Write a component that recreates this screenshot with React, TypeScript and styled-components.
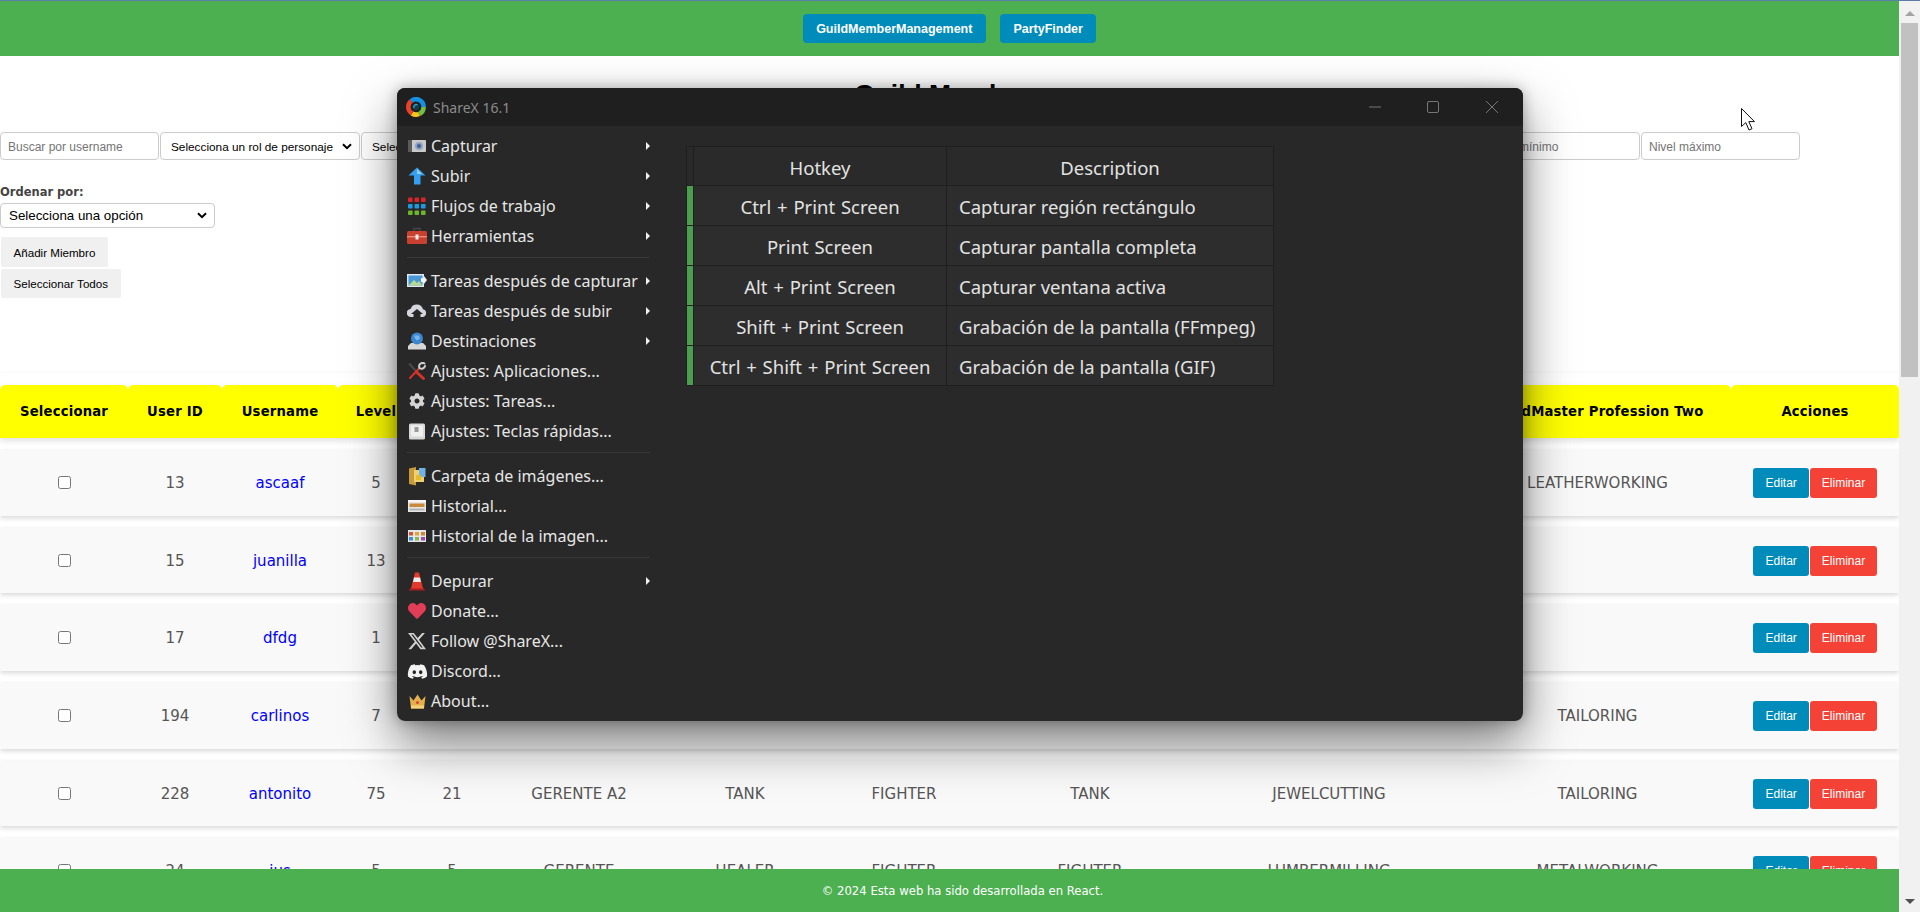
import React from 'react';
import styled, { createGlobalStyle, css } from 'styled-components';
import { FaCog, FaDiscord, FaHeart } from 'react-icons/fa';
import { FaXTwitter } from 'react-icons/fa6';

const GlobalStyle = createGlobalStyle`
  html, body { margin: 0; padding: 0; background: #fff; }
  * { box-sizing: border-box; }
`;

const chevron = css`
  appearance: none;
  background: #fff url("data:image/svg+xml,%3Csvg xmlns='http://www.w3.org/2000/svg' width='10' height='7'%3E%3Cpath d='M1 1.200L5 5.200L9 1.200' fill='none' stroke='%23000' stroke-width='2'/%3E%3C/svg%3E") no-repeat right 7px center;
`;

const Root = styled.div`
  position: relative;
  display: flex;
  width: 1920px;
  height: 912px;
  overflow: hidden;
  border-top: 1px solid #5c7ca8;
  font-family: 'Liberation Sans', Arial, sans-serif;
`;

const PageColumn = styled.div`
  display: flex;
  flex-direction: column;
  width: 1899px;
  height: 100%;
`;

const Header = styled.header`
  display: flex;
  justify-content: center;
  gap: 14px;
  flex: 0 0 55px;
  padding-top: 13px;
  background: #4caf50;
`;

const NavButton = styled.a`
  display: flex;
  align-items: center;
  height: 29px;
  padding: 0 13.5px;
  border-radius: 4px;
  background: #008cba;
  color: #fff;
  font-size: 12.5px;
  font-weight: bold;
`;

const Main = styled.main`
  flex: 1;
  min-height: 0;
  overflow: hidden;
`;

const Title = styled.h1`
  margin: 22px 0;
  font-size: 26.4px;
  line-height: 32px;
  text-align: center;
  color: #000;
`;

const FilterRow = styled.div`
  display: flex;
  gap: 1px;
`;

const FilterInput = styled.input<{ $w?: number }>`
  width: ${(p) => p.$w ?? 159}px;
  height: 28px;
  padding: 2px 7px 0;
  border: 1px solid #ccc;
  border-radius: 4px;
  font-family: 'Liberation Sans', Arial, sans-serif;
  font-size: 12px;
  &::placeholder { color: #757575; }
`;

const FilterSelect = styled.select<{ $w: number }>`
  ${chevron}
  width: ${(p) => p.$w}px;
  height: 28px;
  padding: 1px 20px 0 10px;
  border: 1px solid #ccc;
  border-radius: 4px;
  color: #000;
  font-family: 'Liberation Sans', Arial, sans-serif;
  font-size: 11.8px;
`;

const SortLabel = styled.label`
  display: block;
  margin-top: 25px;
  height: 15px;
  line-height: 15px;
  font-family: 'DejaVu Sans', Verdana, sans-serif;
  font-size: 11.5px;
  font-weight: bold;
  color: #444;
`;

const SortSelect = styled.select`
  ${chevron}
  display: block;
  width: 215px;
  height: 25px;
  margin-top: 3px;
  padding: 0 20px 0 8px;
  border: 1px solid #ccc;
  border-radius: 4px;
  color: #000;
  font-family: 'Liberation Sans', Arial, sans-serif;
  font-size: 13.33px;
`;

const PlainButton = styled.button`
  display: block;
  height: ${(p: { $h: number }) => p.$h}px;
  margin: 2px 0 0 1px;
  padding: 0 12.5px;
  border: none;
  border-radius: 2px;
  background: #f0f0f0;
  color: #000;
  font-family: 'Liberation Sans', Arial, sans-serif;
  font-size: 11.6px;
`;

const ButtonGroup = styled.div`
  margin-top: 9px;
`;

const MembersTable = styled.table`
  width: 1899px;
  margin-top: 75px;
  border-collapse: separate;
  border-spacing: 0 12px;
  table-layout: fixed;
  font-family: 'DejaVu Sans', Verdana, sans-serif;
  box-shadow: 0 0 3px rgba(0, 0, 0, 0.06);
`;

const HeadCell = styled.th`
  height: 53px;
  padding: 0;
  background: #ffff00;
  border-radius: 5px 5px 0 0;
  color: #000;
  font-size: 13.2px;
  font-weight: bold;
  white-space: nowrap;
  overflow: hidden;
  letter-spacing: 0.2px;
`;

const HeadRow = styled.tr`
  box-shadow: 0 3px 6px rgba(0, 0, 0, 0.12);
`;

const BodyRow = styled.tr`
  background: #f9f9f9;
  box-shadow: 0 2px 5px rgba(0, 0, 0, 0.16);
`;

const Cell = styled.td`
  height: 65.7px;
  padding: 0;
  text-align: center;
  color: #555;
  font-size: 15px;
  white-space: nowrap;
`;

const UserName = styled.span`
  color: #0000ff;
`;

const ActionButton = styled.button<{ $danger?: boolean }>`
  height: 30px;
  margin-right: 1px;
  padding: 0 ${(p) => (p.$danger ? '11.5px' : '12.5px')};
  border: none;
  border-radius: 3px;
  background: ${(p) => (p.$danger ? '#f44336' : '#008cba')};
  color: #fff;
  font-family: 'Liberation Sans', Arial, sans-serif;
  font-size: 12px;
`;

const ActionsWrap = styled.div`
  display: flex;
  padding-left: 22px;
`;

const Footer = styled.footer`
  display: flex;
  align-items: center;
  justify-content: center;
  flex: 0 0 43px;
  padding-left: 26px;
  background: #4caf50;
  color: #fff;
  font-family: 'DejaVu Sans', Verdana, sans-serif;
  font-size: 11.65px;
`;

const ScrollTrack = styled.div`
  display: flex;
  flex-direction: column;
  align-items: center;
  width: 21px;
  background: #f1f1f1;
`;

const ScrollArrow = styled.div<{ $down?: boolean }>`
  width: 0;
  height: 0;
  margin: ${(p) => (p.$down ? 'auto 0 8px' : '10px 0 7px')};
  border-left: 5px solid transparent;
  border-right: 5px solid transparent;
  ${(p) => (p.$down ? 'border-top: 5px solid #505050;' : 'border-bottom: 5px solid #a3a3a3;')}
`;

const ScrollThumb = styled.div`
  width: 17px;
  height: 354px;
  background: #c1c1c1;
`;

const AppWindow = styled.section`
  position: absolute;
  left: 397px;
  top: 87px;
  display: flex;
  flex-direction: column;
  width: 1126px;
  height: 633px;
  border-radius: 8px;
  background: #282828;
  overflow: hidden;
  font-family: 'Noto Sans', 'Open Sans', sans-serif;
`;

const WindowShadow = styled.div`
  position: absolute;
  left: 397px;
  top: 87px;
  width: 1126px;
  height: 633px;
  border-radius: 8px;
  box-shadow: 0 22px 50px rgba(0, 0, 0, 0.5), 0 0 14px rgba(0, 0, 0, 0.28);
`;

const TitleBar = styled.div`
  display: flex;
  align-items: center;
  flex: 0 0 38px;
  padding-left: 9px;
  background: #1f1f1f;
`;

const WindowTitle = styled.span`
  margin-left: 7px;
  color: #8c8c8c;
  font-size: 14px;
`;

const WindowControls = styled.div`
  display: flex;
  margin-left: auto;
  padding-right: 2px;
`;

const WindowControl = styled.span`
  display: flex;
  align-items: center;
  justify-content: center;
  width: 58.5px;
  height: 38px;
`;

const WindowBody = styled.div`
  display: flex;
  flex: 1;
  min-height: 0;
`;

const Menu = styled.nav`
  flex: 0 0 263px;
  padding: 5px 10px 0 11px;
`;

const MenuRow = styled.div`
  display: flex;
  align-items: center;
  height: 30px;
  color: #e6e6e6;
  font-size: 16px;
  white-space: nowrap;
`;

const MenuIconSlot = styled.span`
  display: flex;
  align-items: center;
  justify-content: center;
  flex: 0 0 18px;
  min-width: 0;
  height: 18px;
  margin-right: 5px;
  svg { flex: none; }
`;

const MenuArrow = styled.span`
  width: 0;
  height: 0;
  margin-left: auto;
  border-top: 4px solid transparent;
  border-bottom: 4px solid transparent;
  border-left: 4px solid #f0f0f0;
`;

const MenuSeparator = styled.div`
  height: 15px;
  padding-top: 6px;
  margin-left: -1px;
  &::before {
    content: '';
    display: block;
    height: 1px;
    background: #383838;
  }
`;

const Content = styled.div`
  flex: 1;
  padding: 20px 0 0 26px;
`;

const HotkeyTable = styled.table`
  width: 588px;
  border-collapse: collapse;
  table-layout: fixed;
  color: #e2e2e2;
  font-size: 18.5px;
`;

const HotkeyHead = styled.th<{ $w?: number }>`
  height: 39px;
  padding: 2px 0 0;
  border: 1px solid #1f1f1f;
  background: #2a2a2a;
  font-weight: normal;
  width: ${(p) => (p.$w ? `${p.$w}px` : 'auto')};
`;

const HotkeyCell = styled.td<{ $left?: boolean }>`
  height: 40px;
  padding: ${(p) => (p.$left ? '2px 0 0 12px' : '2px 0 0')};
  border: 1px solid #1f1f1f;
  background: #2d2d2d;
  text-align: ${(p) => (p.$left ? 'left' : 'center')};
  word-spacing: ${(p) => (p.$left ? '0' : '1px')};
  white-space: nowrap;
`;

const StatusCell = styled.td`
  padding: 0;
  border: 1px solid #1f1f1f;
  background: #4a9f4e;
`;

const Cursor = styled.svg`
  position: absolute;
  left: 1740px;
  top: 106px;
`;

/* icons of the ShareX menu */
const ShareXLogo = () => (
  <svg width="20" height="20" viewBox="0 0 20 20" fill="none" strokeWidth="4.6">
    <path d="M5.2 4A7.6 7.6 0 0 1 17.600 10" stroke="#1591e3" />
    <path d="M17.600 10A7.6 7.6 0 0 1 13 17" stroke="#72bf44" />
    <path d="M13 17A7.6 7.6 0 0 1 6 16.500" stroke="#f9c51c" />
    <path d="M6 16.500A7.6 7.6 0 0 1 5.2 4" stroke="#e9412b" />
    <circle cx="10" cy="10" r="3.3" fill="#123c48" stroke="none" />
    <path d="M8 11A2.4 2.4 0 0 1 11.500 8" stroke="#26a4d8" strokeWidth="1.4" />
  </svg>
);

const CameraIcon = () => (
  <svg width="18" height="18" viewBox="0 0 18 18">
    <rect x="0" y="3" width="18" height="12" rx="1" fill="#c9c9c9" />
    <rect x="0" y="3" width="4" height="12" fill="#5b5b5b" />
    <circle cx="11" cy="9" r="4" fill="#8fa3c0" />
    <circle cx="11" cy="9" r="2" fill="#3f5f96" />
  </svg>
);

const UploadIcon = () => (
  <svg width="18" height="18" viewBox="0 0 18 18">
    <path d="M9 .5L17.500 8.500H12.500V17.500H6V8.500H.5Z" fill="#35a0ef" />
    <path d="M9 2L14 7H9Z" fill="#8fd2fb" />
  </svg>
);

const WorkflowIcon = () => (
  <svg width="18" height="18" viewBox="0 0 18 18">
    {['#d6262c', '#1d9be0', '#6fb52c'].map((color, row) =>
      [0, 6.5, 13].map((x) => <rect key={`${row}-${x}`} x={x} y={row * 6.5 + 0.5} width="4.6" height="4.4" rx="1" fill={color} />)
    )}
  </svg>
);

const ToolboxIcon = () => (
  <svg width="20" height="18" viewBox="0 0 20 18">
    <path d="M7 4V1.500H13V4" fill="none" stroke="#444" strokeWidth="1.5" />
    <rect x="0" y="4" width="20" height="13" rx="1.5" fill="#c8402f" />
    <rect x="0" y="9" width="20" height="1.4" fill="#f08a72" />
    <rect x="8.5" y="7.5" width="3" height="5" fill="#eee" />
  </svg>
);

const AfterCaptureIcon = () => (
  <svg width="20" height="18" viewBox="0 0 20 18">
    <rect x="0" y="2" width="17" height="13" fill="#dfe7ef" />
    <rect x="1.5" y="3.5" width="14" height="10" fill="#4a97d8" />
    <path d="M1.500 13.500L7 8l3 3 2-2 3.500 4.500Z" fill="#b6d98f" />
    <path d="M14 6h3V4l3 4-3 4v-2h-3Z" fill="#f0f4f7" />
  </svg>
);

const CloudIcon = () => (
  <svg width="20" height="18" viewBox="0 0 20 18">
    <path d="M4 15a4 4 0 0 1-.4-8A6.500 6.500 0 0 1 16 7.200 4 4 0 0 1 16 15h-2.500v-3H16l-6-5-6 5h2.500v3Z" fill="#d5d5de" />
  </svg>
);

const DestinationsIcon = () => (
  <svg width="18" height="18" viewBox="0 0 18 18">
    <path d="M3 11H15L18 14V17.500H0V14Z" fill="#d7d7d7" />
    <circle cx="9" cy="6.5" r="6" fill="#3a86cf" />
    <path d="M6 3.500h5l1 3-3 2-2-2Z" fill="#7cb6e8" />
  </svg>
);

const ToolsIcon = () => (
  <svg width="18" height="18" viewBox="0 0 18 18" fill="none" strokeLinecap="round">
    <path d="M1.500 2L13.500 15" stroke="#4a4a4a" strokeWidth="2" />
    <path d="M9 10.500L15.500 16.500" stroke="#d8332a" strokeWidth="2.8" />
    <path d="M2 16L11.500 6" stroke="#d8332a" strokeWidth="2" />
    <path d="M11.500 6A3.500 3.500 0 0 1 16.500 1.500M11.500 6A3.500 3.500 0 0 0 17 4" stroke="#cfcfcf" strokeWidth="2" />
  </svg>
);

const KeyIcon = () => (
  <svg width="16" height="17" viewBox="0 0 16 17">
    <rect x="0" y=".5" width="16" height="16" rx="1.5" fill="#d8d8d8" />
    <rect x="2" y="2.5" width="12" height="11" fill="#efefef" />
    <rect x="5.5" y="4" width="4" height="5" fill="#9a9a9a" />
  </svg>
);

const FolderIcon = () => (
  <svg width="18" height="19" viewBox="0 0 18 19">
    <path d="M1 1.500L8 0V18.500L1 17Z" fill="#c79a3a" />
    <rect x="6" y="3" width="10" height="12" fill="#f0cf6e" />
    <rect x="11" y="1" width="6.5" height="9" fill="#6fb2e8" />
    <rect x="8" y="8" width="5" height="5" fill="#e9b92c" />
  </svg>
);

const HistoryIcon = () => (
  <svg width="18" height="18" viewBox="0 0 18 18">
    <rect x="0" y="3" width="18" height="12" fill="#e6e6e6" />
    <rect x="0" y="3" width="18" height="2" fill="#f6f6f6" />
    <rect x="1.5" y="6.5" width="15" height="3.5" fill="#c9883a" />
    <rect x="1.5" y="11.5" width="15" height="2" fill="#b5b5b5" />
  </svg>
);

const ImageHistoryIcon = () => (
  <svg width="18" height="18" viewBox="0 0 18 18">
    <rect x="0" y="3" width="18" height="12" fill="#e6e6e6" />
    {[
      [1, 5, '#d84f3a'], [7, 5, '#e0a63a'], [13, 5, '#c9883a'],
      [1, 10, '#3a8fd8'], [7, 10, '#8bb84a'], [13, 10, '#a04ab8'],
    ].map(([x, y, color]) => (
      <rect key={`${x}-${y}`} x={x as number} y={y as number} width="4" height="3.5" fill={color as string} />
    ))}
  </svg>
);

const ConeIcon = () => (
  <svg width="18" height="19" viewBox="0 0 18 19">
    <path d="M.5 18.500L3 15.500H15L17.500 18.500Z" fill="#a71e1e" />
    <path d="M7 .5H11L15 16.500H3Z" fill="#e23b2e" />
    <path d="M6 5.500H12L13 10H5Z" fill="#f3eaea" />
  </svg>
);

const CrownIcon = () => (
  <svg width="17" height="15" viewBox="0 0 17 15">
    <path d="M.5 2L4.500 6.500L8.500 .5L12.500 6.500L16.500 2L15 14.500H2Z" fill="#e3b04b" />
    <rect x="2" y="11.5" width="13" height="3" fill="#f4d27a" />
    <circle cx="8.5" cy="8.5" r="1.5" fill="#d8483a" />
  </svg>
);

type MenuEntry = { label: string; icon: React.ReactNode; arrow?: boolean };

const menuGroups: MenuEntry[][] = [
  [
    { label: 'Capturar', icon: <CameraIcon />, arrow: true },
    { label: 'Subir', icon: <UploadIcon />, arrow: true },
    { label: 'Flujos de trabajo', icon: <WorkflowIcon />, arrow: true },
    { label: 'Herramientas', icon: <ToolboxIcon />, arrow: true },
  ],
  [
    { label: 'Tareas después de capturar', icon: <AfterCaptureIcon />, arrow: true },
    { label: 'Tareas después de subir', icon: <CloudIcon />, arrow: true },
    { label: 'Destinaciones', icon: <DestinationsIcon />, arrow: true },
    { label: 'Ajustes: Aplicaciones...', icon: <ToolsIcon /> },
    { label: 'Ajustes: Tareas...', icon: <FaCog size={16} color="#d4d4d4" /> },
    { label: 'Ajustes: Teclas rápidas...', icon: <KeyIcon /> },
  ],
  [
    { label: 'Carpeta de imágenes...', icon: <FolderIcon /> },
    { label: 'Historial...', icon: <HistoryIcon /> },
    { label: 'Historial de la imagen...', icon: <ImageHistoryIcon /> },
  ],
  [
    { label: 'Depurar', icon: <ConeIcon />, arrow: true },
    { label: 'Donate...', icon: <FaHeart size={18} color="#e23d57" /> },
    { label: 'Follow @ShareX...', icon: <FaXTwitter size={20} color="#d2d2d2" /> },
    { label: 'Discord...', icon: <FaDiscord size={21} color="#f2f2f2" /> },
    { label: 'About...', icon: <CrownIcon /> },
  ],
];

const hotkeys = [
  ['Ctrl + Print Screen', 'Capturar región rectángulo'],
  ['Print Screen', 'Capturar pantalla completa'],
  ['Alt + Print Screen', 'Capturar ventana activa'],
  ['Shift + Print Screen', 'Grabación de la pantalla (FFmpeg)'],
  ['Ctrl + Shift + Print Screen', 'Grabación de la pantalla (GIF)'],
];

const columns: [string, number][] = [
  ['Seleccionar', 128],
  ['User ID', 94],
  ['Username', 116],
  ['Level', 76],
  ['Ilvl', 76],
  ['Guild Rank', 178],
  ['Rol', 154],
  ['Clase', 164],
  ['Rol Secundario', 208],
  ['GuildMaster Profession One', 270],
  ['GuildMaster Profession Two', 267],
  ['Acciones', 168],
];

const members = [
  ['13', 'ascaaf', '5', '5', 'GERENTE', 'TANK', 'FIGHTER', 'TANK', 'MINING', 'LEATHERWORKING'],
  ['15', 'juanilla', '13', '8', 'GERENTE', 'HEALER', 'FIGHTER', 'HEALER', '', ''],
  ['17', 'dfdg', '1', '1', 'MIEMBRO', 'TANK', 'FIGHTER', 'TANK', '', ''],
  ['194', 'carlinos', '7', '7', 'GERENTE', 'TANK', 'FIGHTER', 'TANK', 'BLACKSMITHING', 'TAILORING'],
  ['228', 'antonito', '75', '21', 'GERENTE A2', 'TANK', 'FIGHTER', 'TANK', 'JEWELCUTTING', 'TAILORING'],
  ['24', 'jus', '5', '5', 'GERENTE', 'HEALER', 'FIGHTER', 'FIGHTER', 'LUMBERMILLING', 'METALWORKING'],
];

export default function App() {
  return (
    <>
      <GlobalStyle />
      <Root>
        <PageColumn>
          <Header>
            <NavButton>GuildMemberManagement</NavButton>
            <NavButton>PartyFinder</NavButton>
          </Header>
          <Main>
            <Title>Guild Members</Title>
            <FilterRow>
              <FilterInput placeholder="Buscar por username" />
              <FilterSelect $w={200}><option>Selecciona un rol de personaje</option></FilterSelect>
              <FilterSelect $w={223}><option>Selecciona un rango</option></FilterSelect>
              <FilterSelect $w={223}><option>Selecciona una clase</option></FilterSelect>
              <FilterSelect $w={223}><option>Selecciona un rol</option></FilterSelect>
              <FilterSelect $w={223}><option>Selecciona una profesión</option></FilterSelect>
              <FilterSelect $w={223}><option>Selecciona una profesión</option></FilterSelect>
              <FilterInput placeholder="Nivel mínimo" />
              <FilterInput $w={159} placeholder="Nivel máximo" />
            </FilterRow>
            <SortLabel>Ordenar por:</SortLabel>
            <SortSelect><option>Selecciona una opción</option></SortSelect>
            <ButtonGroup>
              <PlainButton $h={30}>Añadir Miembro</PlainButton>
              <PlainButton $h={29}>Seleccionar Todos</PlainButton>
            </ButtonGroup>
            <MembersTable>
              <colgroup>
                {columns.map(([name, width]) => <col key={name} width={width} />)}
              </colgroup>
              <thead>
                <HeadRow>
                  {columns.map(([name]) => <HeadCell key={name}>{name}</HeadCell>)}
                </HeadRow>
              </thead>
              <tbody>
                {members.map(([id, user, ...rest]) => (
                  <BodyRow key={id}>
                    <Cell><input type="checkbox" /></Cell>
                    <Cell>{id}</Cell>
                    <Cell><UserName>{user}</UserName></Cell>
                    {rest.map((value, i) => <Cell key={i}>{value}</Cell>)}
                    <Cell>
                      <ActionsWrap>
                        <ActionButton>Editar</ActionButton>
                        <ActionButton $danger>Eliminar</ActionButton>
                      </ActionsWrap>
                    </Cell>
                  </BodyRow>
                ))}
              </tbody>
            </MembersTable>
          </Main>
          <Footer>© 2024 Esta web ha sido desarrollada en React.</Footer>
        </PageColumn>
        <ScrollTrack>
          <ScrollArrow />
          <ScrollThumb />
          <ScrollArrow $down />
        </ScrollTrack>

        <WindowShadow />
        <AppWindow>
          <TitleBar>
            <ShareXLogo />
            <WindowTitle>ShareX 16.1</WindowTitle>
            <WindowControls>
              <WindowControl>
                <svg width="12" height="12" viewBox="0 0 12 12"><path d="M0 6H12" stroke="#777" /></svg>
              </WindowControl>
              <WindowControl>
                <svg width="12" height="12" viewBox="0 0 12 12" fill="none"><rect x=".5" y=".5" width="11" height="11" rx="1.5" stroke="#777" /></svg>
              </WindowControl>
              <WindowControl>
                <svg width="12" height="12" viewBox="0 0 12 12"><path d="M0 0L12 12M12 0L0 12" stroke="#777" /></svg>
              </WindowControl>
            </WindowControls>
          </TitleBar>
          <WindowBody>
            <Menu>
              {menuGroups.map((group, i) => (
                <React.Fragment key={i}>
                  {i > 0 && <MenuSeparator />}
                  {group.map((entry) => (
                    <MenuRow key={entry.label}>
                      <MenuIconSlot>{entry.icon}</MenuIconSlot>
                      {entry.label}
                      {entry.arrow && <MenuArrow />}
                    </MenuRow>
                  ))}
                </React.Fragment>
              ))}
            </Menu>
            <Content>
              <HotkeyTable>
                <thead>
                  <tr>
                    <HotkeyHead $w={7} />
                    <HotkeyHead $w={253}>Hotkey</HotkeyHead>
                    <HotkeyHead>Description</HotkeyHead>
                  </tr>
                </thead>
                <tbody>
                  {hotkeys.map(([keys, description]) => (
                    <tr key={keys}>
                      <StatusCell />
                      <HotkeyCell>{keys}</HotkeyCell>
                      <HotkeyCell $left>{description}</HotkeyCell>
                    </tr>
                  ))}
                </tbody>
              </HotkeyTable>
            </Content>
          </WindowBody>
        </AppWindow>
        <Cursor width="17" height="26" viewBox="0 0 17 26">
          <path d="M1.500 1.500V19.500L5.800 15.600L9 23L12 21.700L8.800 14.600H14.500Z" fill="#fff" stroke="#111" strokeWidth="1" />
        </Cursor>
      </Root>
    </>
  );
}
